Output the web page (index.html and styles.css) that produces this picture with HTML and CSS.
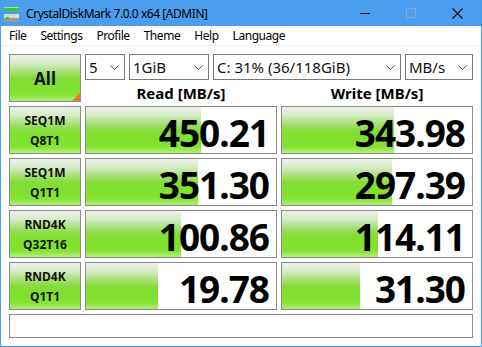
FILE: index.html
```html
<!DOCTYPE html>
<html lang="en">
<head>
    <meta charset="UTF-8">
    <title>CrystalDiskMark 7.0.0 x64 [ADMIN]</title>
    <link rel="stylesheet" href="styles.css">
</head>
<body>
    <div class="window">
        <div class="titlebar">
            <svg class="app-icon" width="16" height="16" viewBox="0 0 16 16">
                <rect x="0" y="1" width="15" height="4" fill="#3cc43c"/>
                <rect x="0" y="1" width="15" height="1" fill="#8ee88e"/>
                <rect x="0" y="8" width="15" height="4" fill="#d8d8d8"/>
                <rect x="0" y="12" width="15" height="4" fill="#9a9a9a"/>
                <rect x="2" y="11" width="3" height="2" fill="#2fbf2f"/>
            </svg>
            <span class="title">CrystalDiskMark 7.0.0 x64 [ADMIN]</span>
            <div class="controls">
                <svg width="46" height="26" viewBox="0 0 46 26"><line x1="17" y1="13.5" x2="27" y2="13.5" stroke="#111" stroke-width="1"/></svg>
                <svg width="46" height="26" viewBox="0 0 46 26"><rect x="17.5" y="8.5" width="9" height="9" fill="none" stroke="#7fa9d6" stroke-width="1"/></svg>
                <svg width="46" height="26" viewBox="0 0 46 26"><path d="M17.5 8.5 L27.5 18.5 M27.5 8.5 L17.5 18.5" stroke="#111" stroke-width="1.1"/></svg>
            </div>
        </div>

        <div class="menubar">
            <span>File</span>
            <span>Settings</span>
            <span>Profile</span>
            <span>Theme</span>
            <span>Help</span>
            <span>Language</span>
        </div>

        <div class="content">
            <div class="board">
                <div class="btn btn-all">All<span class="corner"></span></div>

                <div class="top-right">
                    <div class="selects">
                        <div class="select sel-count">5<svg class="chev" width="9" height="5" viewBox="0 0 9 5"><path d="M0.5 0.5 L4.5 4.5 L8.5 0.5" fill="none" stroke="#555" stroke-width="1"/></svg></div>
                        <div class="select sel-size">1GiB<svg class="chev" width="9" height="5" viewBox="0 0 9 5"><path d="M0.5 0.5 L4.5 4.5 L8.5 0.5" fill="none" stroke="#555" stroke-width="1"/></svg></div>
                        <div class="select sel-drive">C: 31% (36/118GiB)<svg class="chev" width="9" height="5" viewBox="0 0 9 5"><path d="M0.5 0.5 L4.5 4.5 L8.5 0.5" fill="none" stroke="#555" stroke-width="1"/></svg></div>
                        <div class="select sel-unit">MB/s<svg class="chev" width="9" height="5" viewBox="0 0 9 5"><path d="M0.5 0.5 L4.5 4.5 L8.5 0.5" fill="none" stroke="#555" stroke-width="1"/></svg></div>
                    </div>
                    <div class="heads">
                        <div>Read [MB/s]</div>
                        <div>Write [MB/s]</div>
                    </div>
                </div>

                <!-- SEQ1M Q8T1 -->
                <div class="btn btn-label">SEQ1M<br>Q8T1</div>
                <div class="cell"><div class="bar" style="width: 115px"></div><span class="value">450.21</span></div>
                <div class="cell"><div class="bar" style="width: 112px"></div><span class="value">343.98</span></div>

                <!-- SEQ1M Q1T1 -->
                <div class="btn btn-label">SEQ1M<br>Q1T1</div>
                <div class="cell"><div class="bar" style="width: 112px"></div><span class="value">351.30</span></div>
                <div class="cell"><div class="bar" style="width: 110px"></div><span class="value">297.39</span></div>

                <!-- RND4K Q32T16 -->
                <div class="btn btn-label">RND4K<br>Q32T16</div>
                <div class="cell"><div class="bar" style="width: 95px"></div><span class="value">100.86</span></div>
                <div class="cell"><div class="bar" style="width: 96px"></div><span class="value">114.11</span></div>

                <!-- RND4K Q1T1 -->
                <div class="btn btn-label">RND4K<br>Q1T1</div>
                <div class="cell"><div class="bar" style="width: 72px"></div><span class="value">19.78</span></div>
                <div class="cell"><div class="bar" style="width: 78px"></div><span class="value">31.30</span></div>
            </div>

            <div class="status"></div>
        </div>
    </div>
</body>
</html>
```

FILE: styles.css
```css
body {
    margin: 0;
    font-family: "Noto Sans", "Open Sans", sans-serif;
    color: #000;
    background: #fff;
}

.window {
    width: 482px;
    height: 347px;
    box-sizing: border-box;
    border: 1px solid #4a9be8;
    border-top: none;
    background: #fff;
    overflow: hidden;
}

/* title bar */
.titlebar {
    height: 26px;
    background: #4b9dee;
    display: flex;
    align-items: center;
}

.app-icon {
    margin-left: 3px;
    margin-top: 1px;
}

.title {
    margin-left: 6px;
    font-size: 12px;
    color: #000;
    letter-spacing: -0.45px;
}

.controls {
    margin-left: auto;
    display: flex;
    height: 26px;
}

.controls svg {
    display: block;
}

/* menu */
.menubar {
    height: 19px;
    border-bottom: 1px solid #f0f0f0;
    display: flex;
    align-items: center;
    padding-left: 8px;
    gap: 14px;
    font-size: 12px;
    letter-spacing: -0.45px;
}

/* main area */
.content {
    padding: 8px;
}

.board {
    display: grid;
    grid-template-columns: 72px 192px 192px;
    grid-auto-rows: 48px;
    gap: 4px;
}

.btn {
    box-sizing: border-box;
    border: 1px solid #8c8c8c;
    background: linear-gradient(to bottom, #eef0ec 0%, #d6ecc6 18%, #a8e07a 36%, #86dc3c 50%, #7fe12e 62%, #82e331 86%, #b4f07a 100%);
    display: flex;
    align-items: center;
    justify-content: center;
    text-align: center;
    font-weight: bold;
    color: #111;
    position: relative;
}

.btn-all {
    font-size: 17px;
}

.corner {
    position: absolute;
    right: 0;
    bottom: 0;
    width: 0;
    height: 0;
    border-left: 8px solid transparent;
    border-bottom: 8px solid #f0782a;
}

.btn-label {
    font-size: 12px;
    line-height: 20px;
    padding-top: 1px;
}

.top-right {
    grid-column: 2 / 4;
    display: flex;
    flex-direction: column;
}

.selects {
    display: flex;
    gap: 4px;
    height: 26px;
}

.select {
    box-sizing: border-box;
    border: 1px solid #7a7a7a;
    background: #fff;
    display: flex;
    align-items: center;
    padding-left: 3px;
    font-size: 15px;
    color: #111;
}

.chev {
    margin-left: auto;
    margin-right: 5px;
}

.sel-count { width: 40px; }
.sel-size { width: 80px; }
.sel-drive { width: 188px; }
.sel-unit { width: 68px; }

.heads {
    display: grid;
    grid-template-columns: 192px 192px;
    gap: 4px;
    height: 22px;
}

.heads div {
    text-align: center;
    font-weight: bold;
    font-size: 15px;
    line-height: 18px;
    padding-top: 4px;
}

.cell {
    box-sizing: border-box;
    border: 1px solid #8c8c8c;
    background: #fff;
    position: relative;
    display: flex;
    align-items: center;
    justify-content: flex-end;
}

.bar {
    position: absolute;
    left: 0;
    top: 0;
    bottom: 0;
    background: linear-gradient(to bottom, #eef0ec 0%, #d6ecc6 18%, #a8e07a 36%, #86dc3c 50%, #7fe12e 62%, #82e331 86%, #b4f07a 100%);
}

.value {
    position: relative;
    font-size: 37px;
    font-weight: bold;
    letter-spacing: -1px;
    padding-right: 7px;
    padding-top: 6px;
    line-height: 40px;
}

.status {
    margin-top: 4px;
    height: 24px;
    box-sizing: border-box;
    border: 1px solid #8c8c8c;
    background: #fff;
}
```
